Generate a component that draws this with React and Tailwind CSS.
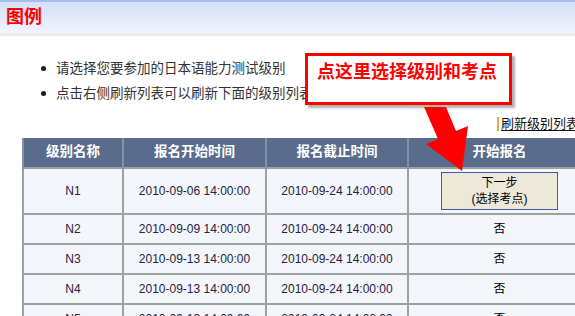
import React from "react";

const font = { cjk: "font-['Liberation_Sans','Noto_Sans_CJK_SC',sans-serif]" };

const rows = [
  { level: "N1", start: "2010-09-06 14:00:00", end: "2010-09-24 14:00:00", open: true },
  { level: "N2", start: "2010-09-09 14:00:00", end: "2010-09-24 14:00:00" },
  { level: "N3", start: "2010-09-13 14:00:00", end: "2010-09-24 14:00:00" },
  { level: "N4", start: "2010-09-13 14:00:00", end: "2010-09-24 14:00:00" },
  { level: "N5", start: "2010-09-13 14:00:00", end: "2010-09-24 14:00:00" }
];

const notes = ["请选择您要参加的日本语能力测试级别", "点击右侧刷新列表可以刷新下面的级别列表"];

function Callout() {
  return (
    <>
      <div className="absolute left-[305px] top-[53px] h-[52px] w-[207px] border-[3px] border-[#ff0000] bg-white pl-[9px] pt-[3px] shadow-[3px_3px_2px_rgba(0,0,0,0.3)]">
        <div className="whitespace-nowrap text-[18px] font-bold leading-[26px] text-[#ff0000]">
          点这里选择级别和考点
        </div>
      </div>
      <svg className="absolute left-0 top-0" width="575" height="316" viewBox="0 0 575 316">
        <polygon
          points="424,107 446,107 456,131 468,126 462,171 426,144 438,139"
          fill="#ff0000"
        />
      </svg>
    </>
  );
}

export default function App() {
  return (
    <div className={`relative h-[316px] w-[575px] overflow-hidden bg-white ${font.cjk}`}>
      <div className="h-[33px] border-t-2 border-[#a6bde8] bg-gradient-to-b from-[#d5dff7] to-[#f0f4fd] pl-[6px]">
        <span className="text-[18px] font-bold leading-[30px] text-[#ff0000]">图例</span>
      </div>
      <div className="h-[3px] bg-[#ececec]" />

      <ul className="pt-[20px] text-[13.5px] leading-[25px] text-[#333]">
        {notes.map((t) => (
          <li key={t} className="flex items-center whitespace-nowrap">
            <span className="ml-[41px] mr-[10px] h-[5px] w-[5px] rounded-full bg-[#1a1a2e]" />
            {t}
          </li>
        ))}
      </ul>

      <div className="ml-[497px] mt-[8px] flex h-[20px] items-center whitespace-nowrap text-[13px] text-[#111]">
        <span className="mr-[2px] h-[14px] w-[3px] border-l-2 border-[#e0b040]" />
        <span className="underline underline-offset-2">刷新级别列表</span>
      </div>

      <table className="ml-[22px] mt-[4px] w-[568px] table-fixed border-collapse border-l-2 border-[#4d5d78] text-[12px] text-[#2a2040]">
        <colgroup>
          <col className="w-[100px]" />
          <col className="w-[143px]" />
          <col className="w-[142px]" />
          <col className="w-[183px]" />
        </colgroup>
        <thead>
          <tr className="h-[30px] bg-[#5a6c8c] text-[13.5px] font-bold text-white">
            {["级别名称", "报名开始时间", "报名截止时间", "开始报名"].map((h) => (
              <th key={h} className="border-x-2 border-[#8590a4] text-center font-bold">
                {h}
              </th>
            ))}
          </tr>
        </thead>
        <tbody>
          {rows.map((r) => (
            <tr key={r.level} className={`${r.open ? "h-[46px]" : "h-[30px]"} bg-[#f3f7fc]`}>
              <td className="border-2 border-[#a0a0a0] text-center">{r.level}</td>
              <td className="border-2 border-[#a0a0a0] text-center">{r.start}</td>
              <td className="border-2 border-[#a0a0a0] text-center">{r.end}</td>
              <td className="border-2 border-[#a0a0a0] text-center text-black">
                {r.open ? (
                  <button className="mx-auto flex h-[38px] w-[117px] flex-col items-center justify-center border border-[#3c5fa8] bg-[#ece9d8] text-[12px] leading-[16px] text-black">
                    <span>下一步</span>
                    <span>(选择考点)</span>
                  </button>
                ) : (
                  "否"
                )}
              </td>
            </tr>
          ))}
        </tbody>
      </table>

      <Callout />
    </div>
  );
}
